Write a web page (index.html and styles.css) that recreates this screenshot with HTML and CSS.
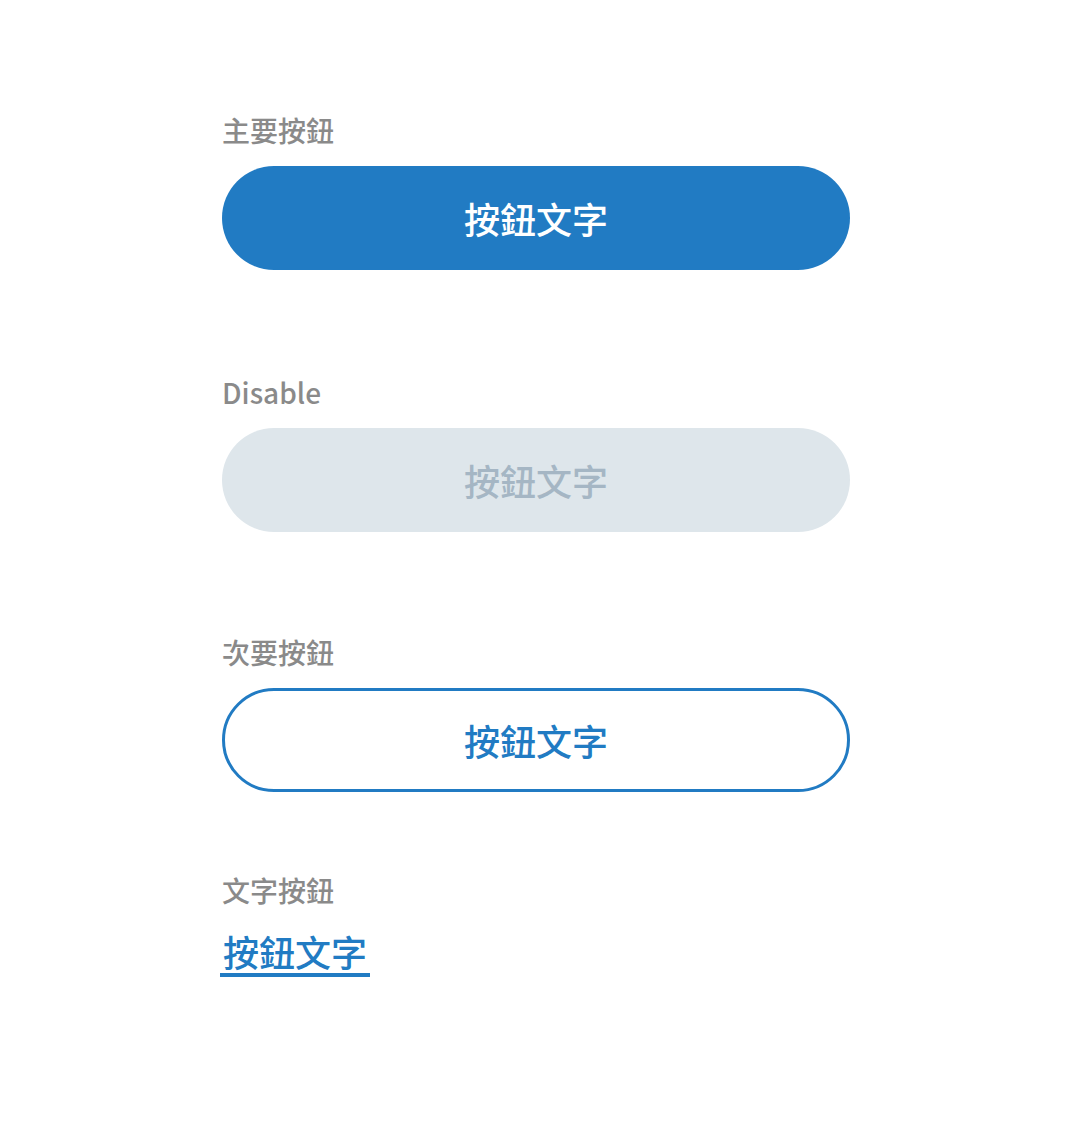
FILE: index.html
```html
<!DOCTYPE html>
<html lang="zh-Hant">
<head>
<meta charset="utf-8">
<title>按鈕</title>
<link rel="stylesheet" href="styles.css">
</head>
<body>
<main class="page">
  <section class="group group-first">
    <div class="label">主要按鈕</div>
    <button class="btn btn-primary">按鈕文字</button>
  </section>
  <section class="group">
    <div class="label">Disable</div>
    <button class="btn btn-disabled" disabled>按鈕文字</button>
  </section>
  <section class="group">
    <div class="label">次要按鈕</div>
    <button class="btn btn-secondary">按鈕文字</button>
  </section>
  <section class="group group-text">
    <div class="label">文字按鈕</div>
    <div class="link-row"><a class="text-btn" href="#">按鈕文字</a></div>
  </section>
</main>
</body>
</html>
```

FILE: styles.css
```css
html, body {
  margin: 0;
  padding: 0;
  background: #ffffff;
}

body {
  font-family: "Noto Sans CJK TC", "Noto Sans", sans-serif;
}

.page {
  width: 628px;
  margin-left: 222px;
  padding-top: 110px;
  display: flex;
  flex-direction: column;
  gap: 100px;
}

.group {
  display: flex;
  flex-direction: column;
  gap: 16px;
}

.group-first {
  margin-bottom: 2px;
}

.group-text {
  margin-top: -22px;
  gap: 19px;
}

.label {
  font-size: 28px;
  font-weight: 500;
  line-height: 40px;
  height: 40px;
  color: #8a8a8a;
}

.btn {
  box-sizing: border-box;
  width: 628px;
  height: 104px;
  border-radius: 52px;
  border: none;
  font-family: inherit;
  font-size: 36px;
  font-weight: 500;
  line-height: 1;
  padding: 0;
  display: flex;
  align-items: center;
  justify-content: center;
  cursor: pointer;
}

.btn-primary {
  background: #217bc3;
  color: #ffffff;
}

.btn-disabled {
  background: #dee6eb;
  color: #a5b6c4;
  cursor: default;
}

.btn-secondary {
  background: #ffffff;
  color: #217bc3;
  border: 3px solid #217bc3;
}

.link-row {
  display: flex;
}

.text-btn {
  display: inline-block;
  margin-left: -2px;
  padding: 0 3px;
  font-size: 36px;
  font-weight: 500;
  line-height: 44px;
  color: #217bc3;
  text-decoration: none;
  border-bottom: 4px solid #217bc3;
}
```
